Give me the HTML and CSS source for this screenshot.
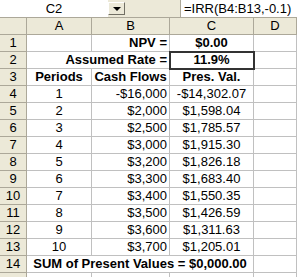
FILE: index.html
```html
<!DOCTYPE html>
<html lang="en">
<head>
    <meta charset="UTF-8">
    <title>NPV sheet</title>
    <link rel="stylesheet" href="styles.css">
</head>
<body>
    <div class="fbar">
        <div class="namebox">C2</div>
        <div class="drop"><span class="arrow"></span></div>
        <div class="fx">=IRR(B4:B13,-0.1)</div>
    </div>
    <div class="sheet">
        <div class="hd"></div><div class="hd">A</div><div class="hd">B</div><div class="hd">C</div><div class="hd">D</div>

        <div class="rh">1</div><div class="cell"></div><div class="cell r b">NPV =</div><div class="cell c b">$0.00</div><div class="cell"></div>
        <div class="rh">2</div><div class="cell span2 r b">Assumed Rate =</div><div class="cell c b sel">11.9%</div><div class="cell"></div>
        <div class="rh">3</div><div class="cell c b">Periods</div><div class="cell c b">Cash Flows</div><div class="cell c b">Pres. Val.</div><div class="cell"></div>

        <div class="rh">4</div><div class="cell c">1</div><div class="cell r">-$16,000</div><div class="cell c">-$14,302.07</div><div class="cell"></div>
        <div class="rh">5</div><div class="cell c">2</div><div class="cell r">$2,000</div><div class="cell c">$1,598.04</div><div class="cell"></div>
        <div class="rh">6</div><div class="cell c">3</div><div class="cell r">$2,500</div><div class="cell c">$1,785.57</div><div class="cell"></div>
        <div class="rh">7</div><div class="cell c">4</div><div class="cell r">$3,000</div><div class="cell c">$1,915.30</div><div class="cell"></div>
        <div class="rh">8</div><div class="cell c">5</div><div class="cell r">$3,200</div><div class="cell c">$1,826.18</div><div class="cell"></div>
        <div class="rh">9</div><div class="cell c">6</div><div class="cell r">$3,300</div><div class="cell c">$1,683.40</div><div class="cell"></div>
        <div class="rh">10</div><div class="cell c">7</div><div class="cell r">$3,400</div><div class="cell c">$1,550.35</div><div class="cell"></div>
        <div class="rh">11</div><div class="cell c">8</div><div class="cell r">$3,500</div><div class="cell c">$1,426.59</div><div class="cell"></div>
        <div class="rh">12</div><div class="cell c">9</div><div class="cell r">$3,600</div><div class="cell c">$1,311.63</div><div class="cell"></div>
        <div class="rh">13</div><div class="cell c">10</div><div class="cell r">$3,700</div><div class="cell c">$1,205.01</div><div class="cell"></div>

        <div class="rh">14</div><div class="cell span3 c b">SUM of Present Values = $0,000.00</div><div class="cell"></div>
        <div class="rh"></div><div class="cell"></div><div class="cell"></div><div class="cell"></div><div class="cell"></div>
    </div>
</body>
</html>
```

FILE: styles.css
```css
*{
    margin: 0;
    padding: 0;
    box-sizing: border-box;
}

body{
    background: #fff;
    font-family: "Liberation Sans", Arial, sans-serif;
    font-size: 13px;
    color: #000;
    overflow: hidden;
}

/* formula bar */
.fbar{
    height: 18px;
    background: #ece9d8;
    display: flex;
    border-bottom: 1px solid #aca899;
}
.namebox{
    width: 108px;
    height: 17px;
    background: #fff;
    text-align: center;
    line-height: 17px;
}
.drop{
    width: 17px;
    height: 13px;
    margin-top: 2px;
    background: #ece9d8;
    border: 1px solid;
    border-color: #fff #716f64 #716f64 #fff;
    display: flex;
    justify-content: center;
    align-items: center;
}
.arrow{
    width: 0;
    height: 0;
    border-left: 4px solid transparent;
    border-right: 4px solid transparent;
    border-top: 4px solid #000;
}
.fx{
    margin-left: 55px;
    flex: 1;
    height: 17px;
    background: #fff;
    border-left: 1px solid #aca899;
    padding-left: 3px;
    line-height: 17px;
    white-space: nowrap;
    overflow: hidden;
}

/* grid */
.sheet{
    display: grid;
    grid-template-columns: 27px 65px 78px 84px 1fr;
    grid-template-rows: 17px;
    grid-auto-rows: 17px;
}
.hd, .rh{
    background: #ece9d8;
    border-right: 1px solid #aca899;
    border-bottom: 1px solid #aca899;
    text-align: center;
    line-height: 16px;
}
.cell{
    border-right: 1px solid #c0c0c0;
    border-bottom: 1px solid #c0c0c0;
    line-height: 16px;
    padding: 0 2px;
    white-space: nowrap;
    overflow: hidden;
}
.span2{ grid-column: span 2; }
.span3{ grid-column: span 3; }
.r{ text-align: right; }
.c{ text-align: center; }
.b{ font-weight: bold; }

.sel{
    position: relative;
    z-index: 1;
    outline: 2px solid #333;
    outline-offset: -1px;
}
```
